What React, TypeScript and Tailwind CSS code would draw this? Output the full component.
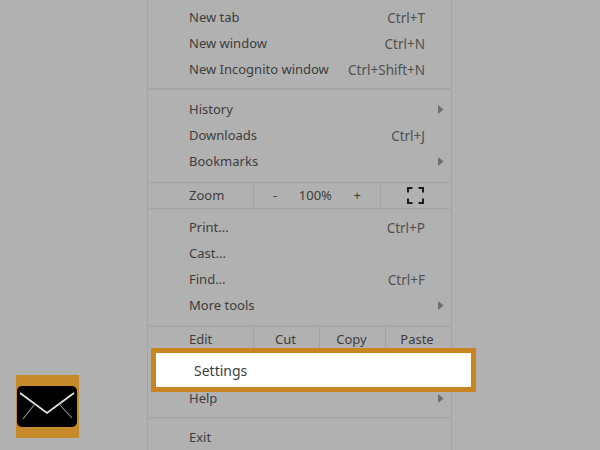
const font = { fontFamily: '"Noto Sans", "Open Sans", sans-serif' };

function Arrow() {
  return (
    <svg width="6" height="9" viewBox="0 0 6 9" className="absolute left-[290px] top-[8px]">
      <path d="M0 0 L5.5 4.5 L0 9 Z" fill="#6f6f6f" />
    </svg>
  );
}

function Row({ label, shortcut, arrow }: { label: string; shortcut?: string; arrow?: boolean }) {
  return (
    <div className="relative flex h-[26px] items-center justify-between pl-[41px] pr-[26px]">
      <span>{label}</span>
      {shortcut && <span className="text-[13.5px] text-[#505050]">{shortcut}</span>}
      {arrow && <Arrow />}
    </div>
  );
}

function Separator({ className }: { className: string }) {
  return <div className={`mx-[1px] h-[2px] bg-[#a6a6a6] ${className}`} />;
}

function FullscreenIcon() {
  return (
    <svg width="17" height="17" viewBox="0 0 17 17" fill="none" stroke="#1c1c1c" strokeWidth="2">
      <path d="M1 5.5 V1 H5.5 M11.5 1 H16 V5.5 M1 11.5 V16 H5.5 M11.5 16 H16 V11.5" />
    </svg>
  );
}

function MailLogo() {
  return (
    <div className="absolute left-[16px] top-[375px] flex h-[63px] w-[63px] items-start bg-[#c78a2a] pl-[1px] pt-[11px]">
      <div className="h-[41px] w-[60px] overflow-hidden rounded-[5px] bg-black">
        <svg width="60" height="41" viewBox="0 0 60 41" fill="none" stroke="#e4e4e4">
          <path d="M3 7 L30 27 L57 7" strokeWidth="1.8" />
          <path d="M17 19 L6 33 M43 19 L55 32" strokeWidth="1.1" stroke="#9a9a9a" />
        </svg>
      </div>
    </div>
  );
}

export default function App() {
  return (
    <div className="relative h-[450px] w-[600px] overflow-hidden bg-[#b1b1b1] text-[13px] text-[#3d3d3d]" style={font}>
      <div className="ml-[147px] h-full w-[305px] border-x border-[#a3a3a3] pt-[5px]">
        <Row label="New tab" shortcut="Ctrl+T" />
        <Row label="New window" shortcut="Ctrl+N" />
        <Row label="New Incognito window" shortcut="Ctrl+Shift+N" />
        <Separator className="mt-[5px] mb-[7px]" />
        <Row label="History" arrow />
        <Row label="Downloads" shortcut="Ctrl+J" />
        <Row label="Bookmarks" arrow />

        <div className="mx-[1px] mt-[7px] flex h-[27px] items-center border-y border-[#a3a3a3]">
          <div className="flex h-full w-[105px] items-center border-r border-[#a3a3a3] pl-[40px]">Zoom</div>
          <div className="flex h-full w-[127px] items-center justify-between border-r border-[#a3a3a3] pl-[19px] pr-[19px]">
            <span>-</span>
            <span>100%</span>
            <span>+</span>
          </div>
          <div className="flex flex-1 items-center justify-center">
            <FullscreenIcon />
          </div>
        </div>

        <div className="mt-[6px]">
          <Row label="Print..." shortcut="Ctrl+P" />
          <Row label="Cast..." />
          <Row label="Find..." shortcut="Ctrl+F" />
          <Row label="More tools" arrow />
        </div>
        <Separator className="mt-[6px]" />

        <div className="mx-[1px] flex h-[26px]">
          <div className="flex w-[105px] items-center border-r border-[#a3a3a3] pl-[40px]">Edit</div>
          <div className="flex w-[66px] items-center justify-center border-r border-[#a3a3a3] pr-[2px]">Cut</div>
          <div className="flex w-[66px] items-center justify-center border-r border-[#a3a3a3] pr-[2px]">Copy</div>
          <div className="flex flex-1 items-center justify-center pr-[2px]">Paste</div>
        </div>
        <div className="h-[33px]" />
        <Row label="Help" arrow />
        <Separator className="mt-[5px] mb-[6px]" />
        <Row label="Exit" />
      </div>

      <div className="absolute left-[151px] top-[348px] flex h-[44px] w-[325px] items-center border-[5px] border-[#c78420] bg-white pl-[38px] text-[14px] text-[#3d3d3d]">
        Settings
      </div>
      <MailLogo />
    </div>
  );
}
